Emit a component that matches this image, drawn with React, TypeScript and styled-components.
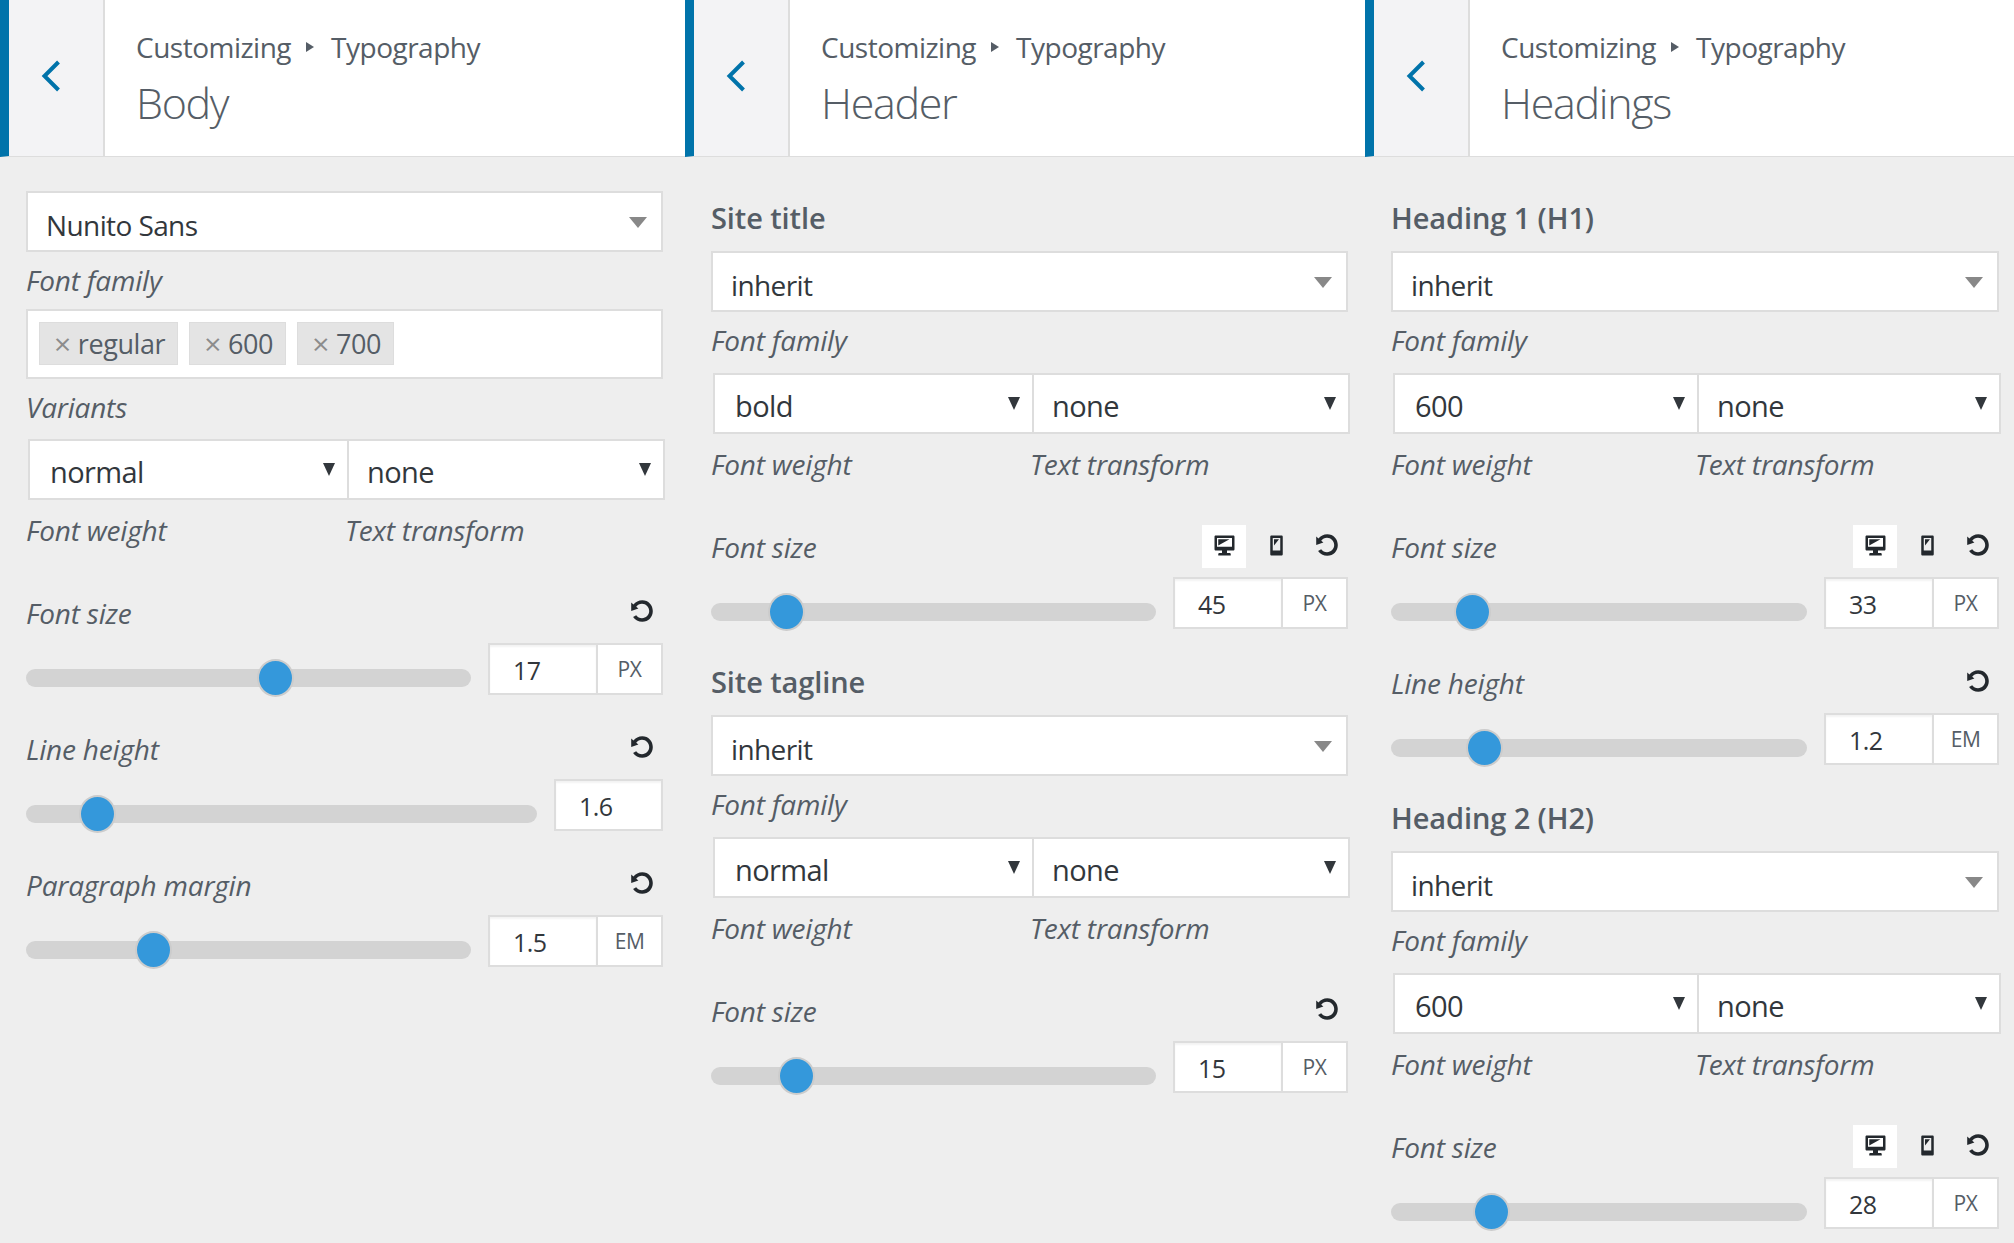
import React, { FunctionComponent } from "react";
import styled, { createGlobalStyle } from "styled-components";

const GlobalStyle = createGlobalStyle`
  html, body {
    margin: 0;
    padding: 0;
    background: #eeeeee;
  }
  * {
    box-sizing: border-box;
  }
`;

const Page = styled.main`
  display: flex;
  width: 2014px;
  height: 1243px;
  overflow: hidden;
  background: #eeeeee;
  font-family: "Open Sans", "Noto Sans", sans-serif;
  color: #32373c;
`;

const Panel = styled.section<{ $width: number }>`
  flex: 0 0 ${(props) => props.$width}px;
  width: ${(props) => props.$width}px;
`;

const Header = styled.header`
  display: flex;
  height: 157px;
  background: #ffffff;
  border-left: 9px solid #0073aa;
  border-bottom: 1px solid #dddddd;
`;

const BackButton = styled.div`
  flex: 0 0 96px;
  display: flex;
  align-items: center;
  padding-left: 31px;
  padding-bottom: 4px;
  background: #f3f3f5;
  border-right: 2px solid #dddddd;
`;

const HeaderText = styled.div`
  padding: 27px 0 0 31px;
  color: #555d66;
`;

const Crumbs = styled.div`
  display: flex;
  align-items: center;
  height: 40px;
  font-size: 28px;
  letter-spacing: -0.5px;
`;

const CrumbArrow = styled.span`
  width: 0;
  height: 0;
  margin: 0 17px 0 15px;
  border-left: 8px solid #555d66;
  border-top: 5px solid transparent;
  border-bottom: 5px solid transparent;
`;

const Title = styled.h1`
  margin: 9px 0 0 0;
  font-size: 43px;
  line-height: 54px;
  font-weight: 300;
  letter-spacing: -1.3px;
`;

const Body = styled.div<{ $top: number; $right: number }>`
  padding: ${(props) => props.$top}px ${(props) => props.$right}px 0 26px;
`;

const SectionTitle = styled.h2`
  height: 34px;
  margin: 36px 0 16px;
  font-size: 29px;
  line-height: 34px;
  font-weight: 600;
  letter-spacing: -0.1px;
  color: #555d66;
`;

const Box = styled.div`
  background: #ffffff;
  border: 2px solid #dddddd;
`;

const FamilySelect = styled(Box)`
  display: flex;
  align-items: center;
  justify-content: space-between;
  height: 61px;
  padding: 6px 14px 0 18px;
  font-size: 28px;
  letter-spacing: -0.6px;
`;

const GreyCaret = styled.span`
  width: 0;
  height: 0;
  margin-top: -5px;
  border-top: 11px solid #888888;
  border-left: 9px solid transparent;
  border-right: 9px solid transparent;
`;

const Caption = styled.div<{ $bottom?: number; $top?: number }>`
  height: 28px;
  margin: ${(props) => props.$top ?? 14}px 0 ${(props) => props.$bottom ?? 15}px;
  font-size: 28px;
  line-height: 28px;
  font-style: italic;
  letter-spacing: -0.2px;
  color: #555d66;
`;

const TagBox = styled(Box)`
  display: flex;
  gap: 11px;
  height: 70px;
  padding: 11px 11px;
`;

const Tag = styled.div`
  display: flex;
  align-items: center;
  height: 43px;
  padding: 0 12px 0 14px;
  background: #e4e4e4;
  border: 1px solid #dddddd;
  font-size: 27px;
  letter-spacing: -0.4px;
  color: #555d66;
`;

const TagCross = styled.span`
  margin-right: 7px;
  font-size: 30px;
  color: #8c8c8c;
`;

const PairRow = styled.div<{ $split: number }>`
  display: grid;
  grid-template-columns: ${(props) => props.$split}px 1fr;
  margin: 0 -2px 0 2px;
`;

const PairSelect = styled(Box)<{ $first?: boolean }>`
  display: flex;
  align-items: center;
  justify-content: space-between;
  height: 61px;
  padding: 3px 12px 0 ${(props) => (props.$first ? 20 : 18)}px;
  margin-left: ${(props) => (props.$first ? 0 : -2)}px;
  font-size: 29px;
  letter-spacing: -0.6px;
`;

const DarkCaret = styled.span`
  width: 0;
  height: 0;
  margin-top: -3px;
  border-top: 13px solid #32373c;
  border-left: 6px solid transparent;
  border-right: 6px solid transparent;
`;

const CaptionRow = styled.div<{ $split: number }>`
  display: grid;
  grid-template-columns: ${(props) => props.$split}px 1fr;
`;

const ControlLabelRow = styled.div`
  display: flex;
  align-items: center;
  justify-content: space-between;
  height: 43px;
  margin-bottom: 9px;
`;

const ControlLabel = styled.span`
  font-size: 28px;
  font-style: italic;
  letter-spacing: -0.2px;
  color: #555d66;
`;

const ControlIcons = styled.div`
  display: flex;
  align-items: center;
  height: 43px;
`;

const IconButton = styled.div<{ $active?: boolean; $width: number }>`
  display: flex;
  align-items: center;
  justify-content: center;
  width: ${(props) => props.$width}px;
  height: 43px;
  padding-bottom: 3px;
  background: ${(props) => (props.$active ? "#ffffff" : "transparent")};
`;

const Control = styled.div`
  margin-bottom: 32px;
`;

const SliderRow = styled.div`
  display: flex;
  align-items: center;
  gap: 17px;
`;

const Track = styled.div`
  position: relative;
  flex: 1;
  height: 18px;
  margin-top: 18px;
  background: #d3d3d3;
  border-radius: 9px;
`;

const Thumb = styled.div`
  position: absolute;
  top: -10px;
  width: 37px;
  height: 38px;
  background: #3498db;
  border: 2px solid #cccccc;
  border-radius: 50%;
`;

const NumberBox = styled(Box)`
  display: flex;
  height: 52px;
`;

const NumberValue = styled.div<{ $solo: boolean }>`
  width: ${(props) => (props.$solo ? 105 : 106)}px;
  padding: 2px 0 0 23px;
  font-size: 25px;
  line-height: 46px;
  letter-spacing: -0.5px;
  box-shadow: inset 0 2px 2px rgba(0, 0, 0, 0.05);
`;

const NumberUnit = styled.div`
  display: flex;
  align-items: center;
  justify-content: center;
  width: 65px;
  border-left: 2px solid #dddddd;
  font-size: 21px;
  letter-spacing: -0.5px;
  color: #555d66;
`;

const BackIcon = () => (
  <svg width="21" height="34" viewBox="0 0 21 34">
    <path d="M18.5 3 L4.5 17 L18.5 31" fill="none" stroke="#0073aa" strokeWidth="4" />
  </svg>
);

const DesktopIcon = () => (
  <svg width="25" height="25" viewBox="0 0 20 20">
    <path
      fill="#23282d"
      d="M3 2h14c.55 0 1 .45 1 1v10c0 .55-.45 1-1 1h-5v2h2c.55 0 1 .45 1 1v1H5v-1c0-.55.45-1 1-1h2v-2H3c-.55 0-1-.45-1-1V3c0-.55.45-1 1-1zm13 9V4H4v7h12zM5 5h9l-9 5V5z"
    />
  </svg>
);

const MobileIcon = () => (
  <svg width="25" height="25" viewBox="0 0 20 20">
    <path
      fill="#23282d"
      d="M6 2h8c.55 0 1 .45 1 1v14c0 .55-.45 1-1 1H6c-.55 0-1-.45-1-1V3c0-.55.45-1 1-1zm7 12V4H7v10h6zM8 5h4l-4 5V5z"
    />
  </svg>
);

const ResetIcon = () => (
  <svg width="24" height="24" viewBox="0 0 20 20">
    <path
      fill="#23282d"
      d="M10.25 1.02c5.1 0 8.75 4.04 8.75 9s-3.65 9-8.75 9c-3.2 0-6.02-1.59-7.68-3.99l2.59-1.52c1.1 1.5 2.86 2.51 4.84 2.51 3.3 0 6-2.79 6-6s-2.7-6-6-6c-1.97 0-3.72 1-4.82 2.49L7 8.02l-6 2v-7L2.89 4.6c1.69-2.17 4.36-3.58 7.36-3.58z"
    />
  </svg>
);

const PanelHeader: FunctionComponent<{ title: string }> = ({ title }) => (
  <Header>
    <BackButton>
      <BackIcon />
    </BackButton>
    <HeaderText>
      <Crumbs>
        Customizing
        <CrumbArrow />
        Typography
      </Crumbs>
      <Title>{title}</Title>
    </HeaderText>
  </Header>
);

const Family: FunctionComponent<{ value: string; bottom?: number }> = ({ value, bottom }) => (
  <>
    <FamilySelect>
      {value}
      <GreyCaret />
    </FamilySelect>
    <Caption $bottom={bottom}>Font family</Caption>
  </>
);

const WeightTransform: FunctionComponent<{
  weight: string;
  split?: number;
  captionSplit?: number;
}> = ({ weight, split = 321, captionSplit = 319 }) => (
  <>
    <PairRow $split={split}>
      <PairSelect $first>
        {weight}
        <DarkCaret />
      </PairSelect>
      <PairSelect>
        none
        <DarkCaret />
      </PairSelect>
    </PairRow>
    <CaptionRow $split={captionSplit}>
      <Caption $top={16} $bottom={47}>
        Font weight
      </Caption>
      <Caption $top={16} $bottom={47}>
        Text transform
      </Caption>
    </CaptionRow>
  </>
);

type SliderProps = {
  label: string;
  value: string;
  unit?: string;
  thumb: number;
  responsive?: boolean;
};

const Slider: FunctionComponent<SliderProps> = ({ label, value, unit, thumb, responsive }) => (
  <Control>
    <ControlLabelRow>
      <ControlLabel>{label}</ControlLabel>
      <ControlIcons>
        {responsive && (
          <>
            <IconButton $active $width={44}>
              <DesktopIcon />
            </IconButton>
            <IconButton $width={60}>
              <MobileIcon />
            </IconButton>
          </>
        )}
        <IconButton $width={42}>
          <ResetIcon />
        </IconButton>
      </ControlIcons>
    </ControlLabelRow>
    <SliderRow>
      <Track>
        <Thumb style={{ left: thumb - 18 }} />
      </Track>
      <NumberBox>
        <NumberValue $solo={!unit}>{value}</NumberValue>
        {unit && <NumberUnit>{unit}</NumberUnit>}
      </NumberBox>
    </SliderRow>
  </Control>
);

const App: FunctionComponent = () => {
  return (
    <Page>
      <GlobalStyle />
      <Panel $width={685}>
        <PanelHeader title="Body" />
        <Body $top={34} $right={22}>
          <Family value="Nunito Sans" />
          <TagBox>
            <Tag>
              <TagCross>×</TagCross>regular
            </Tag>
            <Tag>
              <TagCross>×</TagCross>600
            </Tag>
            <Tag>
              <TagCross>×</TagCross>700
            </Tag>
          </TagBox>
          <Caption $bottom={18}>Variants</Caption>
          <WeightTransform weight="normal" />
          <Slider label="Font size" value="17" unit="PX" thumb={249} />
          <Slider label="Line height" value="1.6" thumb={71} />
          <Slider label="Paragraph margin" value="1.5" unit="EM" thumb={127} />
        </Body>
      </Panel>
      <Panel $width={680}>
        <PanelHeader title="Header" />
        <Body $top={8} $right={17}>
          <SectionTitle>Site title</SectionTitle>
          <Family value="inherit" bottom={19} />
          <WeightTransform weight="bold" />
          <Slider label="Font size" value="45" unit="PX" thumb={75} responsive />
          <SectionTitle>Site tagline</SectionTitle>
          <Family value="inherit" bottom={19} />
          <WeightTransform weight="normal" />
          <Slider label="Font size" value="15" unit="PX" thumb={85} />
        </Body>
      </Panel>
      <Panel $width={649}>
        <PanelHeader title="Headings" />
        <Body $top={8} $right={15}>
          <SectionTitle>Heading 1 (H1)</SectionTitle>
          <Family value="inherit" bottom={19} />
          <WeightTransform weight="600" split={306} captionSplit={304} />
          <Slider label="Font size" value="33" unit="PX" thumb={81} responsive />
          <Slider label="Line height" value="1.2" unit="EM" thumb={93} />
          <SectionTitle>Heading 2 (H2)</SectionTitle>
          <Family value="inherit" bottom={19} />
          <WeightTransform weight="600" split={306} captionSplit={304} />
          <Slider label="Font size" value="28" unit="PX" thumb={100} responsive />
        </Body>
      </Panel>
    </Page>
  );
};

export default App;
